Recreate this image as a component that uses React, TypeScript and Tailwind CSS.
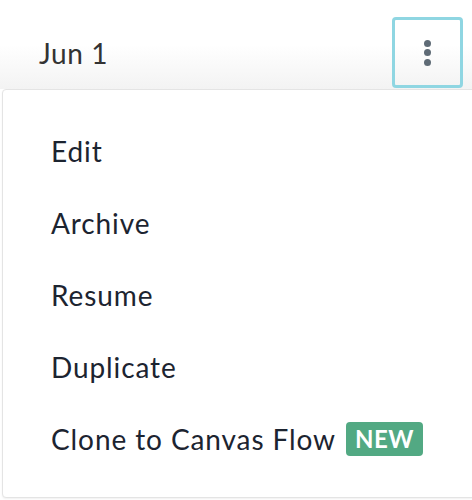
import React from "react";

const items = ["Edit", "Archive", "Resume", "Duplicate"];

export default function App() {
  return (
    <div
      className="w-[472px] h-[500px] bg-white overflow-hidden flex flex-col"
      style={{ fontFamily: "Lato, 'Noto Sans', sans-serif" }}
    >
      <div className="h-[89px] shrink-0 flex items-start justify-between bg-gradient-to-b from-white via-white to-[#f3f3f3] pl-[39px] pr-[9px] pt-[17px]">
        <span className="mt-[18px] text-[28px] leading-[36px] tracking-[0.6px] text-[#333333]">Jun 1</span>
        <button className="w-[71px] h-[71px] rounded-[4px] border-[3px] border-[#8fd6e2] flex flex-col items-center justify-center gap-[2.5px]">
          <span className="w-[7px] h-[7px] rounded-full bg-[#5f6b76]" />
          <span className="w-[7px] h-[7px] rounded-full bg-[#5f6b76]" />
          <span className="w-[7px] h-[7px] rounded-full bg-[#5f6b76]" />
        </button>
      </div>
      <div className="ml-[2px] mr-[-4px] h-[409px] shrink-0 rounded-[4px] border border-[#e4e4e4] bg-white py-[25px] shadow-[0_1px_2px_rgba(0,0,0,0.06)]">
        {items.map((t) => (
          <div key={t} className="h-[72px] flex items-center pl-[48px] text-[28px] tracking-[0.9px] text-[#1c2430]">
            {t}
          </div>
        ))}
        <div className="h-[72px] flex items-center pl-[48px] text-[28px] tracking-[0.9px] text-[#1c2430]">
          <span>Clone to Canvas Flow</span>
          <span className="ml-[10px] h-[34px] px-[9px] rounded-[4px] bg-[#52a983] text-white font-bold text-[24px] leading-[34px] tracking-[0.5px]">
            NEW
          </span>
        </div>
      </div>
    </div>
  );
}
